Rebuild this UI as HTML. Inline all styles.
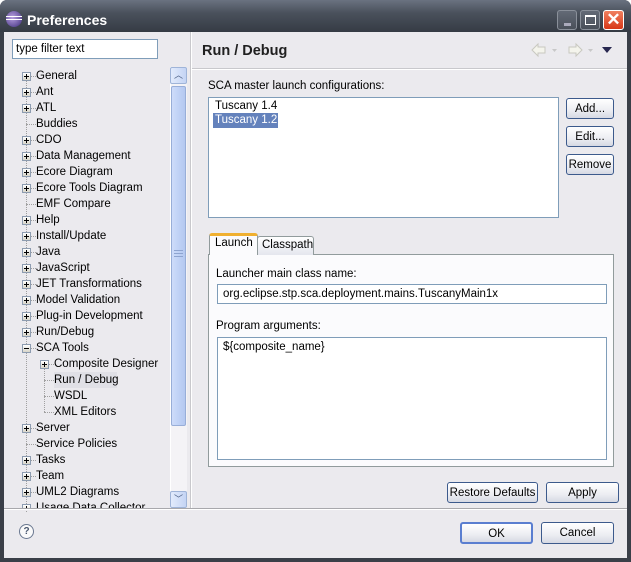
<!DOCTYPE html>
<html><head><style>
*{box-sizing:border-box;margin:0;padding:0}
body{width:631px;height:562px;overflow:hidden;font-family:"Liberation Sans",sans-serif;font-size:11px;color:#000;background:#fff}
.a{position:absolute}
#win{left:0;top:0;width:631px;height:562px;background:#3a3f48;border-radius:7px 7px 0 0}
#title{left:0;top:0;width:631px;height:32px;border-radius:7px 7px 0 0;background:linear-gradient(#6a7280,#4a515c 40%,#353b44)}
#body{left:4px;top:32px;width:623px;height:526px;background:#ebeaee}
.btn{position:absolute;border:1px solid #3c5a8c;border-radius:3px;background:linear-gradient(#fff,#ecedf2 60%,#d6d9e3);text-align:center;font-size:11.5px;line-height:20px}
.t{position:absolute;height:16px;line-height:16px;font-size:11.5px;white-space:nowrap}
.pb{position:absolute;width:9px;height:9px;border:1px solid #8d9cb0;background:linear-gradient(#fff,#d8d5c8);}
.pb:before{content:"";position:absolute;left:1px;top:3px;width:5px;height:1px;background:#000}
.pb.p:after{content:"";position:absolute;left:3px;top:1px;width:1px;height:5px;background:#000}
.dh{position:absolute;height:0;border-top:1px dotted #a0a0a0}
.dv{position:absolute;width:0;border-left:1px dotted #a0a0a0}
</style></head><body>
<div id="win" class="a"></div>
<div id="title" class="a">
 <div class="a" style="left:6px;top:11px;width:16px;height:16px;border-radius:50%;background:radial-gradient(circle at 40% 40%,#b8a0e0,#3a2a7a)"></div>
 <div class="a" style="left:6px;top:16px;width:16px;height:1px;background:#fff"></div>
 <div class="a" style="left:6px;top:19px;width:16px;height:1px;background:#fff"></div>
 <div class="a" style="left:27px;top:12px;color:#fff;font-weight:bold;font-size:14px">Preferences</div>
 <div class="a" style="left:557px;top:10px;width:20px;height:20px;border:1px solid #8a909a;border-radius:3px;background:linear-gradient(#636a76,#4a505a)"><div class="a" style="left:6px;top:12px;width:7px;height:3px;background:#aab"></div></div>
 <div class="a" style="left:580px;top:10px;width:20px;height:20px;border:1px solid #8a909a;border-radius:3px;background:linear-gradient(#636a76,#4a505a)"><div class="a" style="left:4px;top:4px;width:11px;height:10px;border:1px solid #fff;border-top-width:2px"></div></div>
 <div class="a" style="left:603px;top:10px;width:21px;height:20px;border:1px solid #fff;border-radius:3px;background:linear-gradient(#f08060,#d83818);color:#fff;font-weight:bold;font-size:17px;line-height:18px;text-align:center">✕</div>
</div>
<div id="body" class="a">
 <div class="a" style="left:8px;top:7px;width:146px;height:20px;border:1px solid #7f9db9;background:#fff;padding:2px 3px;font-size:11.5px;line-height:14px">type filter text</div>
 <div class="a" style="left:186px;top:0;width:1px;height:476px;background:#c8c8cc"></div>
 <div class="a" style="left:187px;top:0;width:1px;height:476px;background:#fff"></div>
 <div class="a" style="left:166px;top:35px;width:17px;height:441px;background:#f4f3f6;border-left:1px solid #fff"></div>
 <div class="a" style="left:166px;top:35px;width:17px;height:17px;border:1px solid #9fb4d8;border-radius:2px;background:linear-gradient(90deg,#e2ebfc,#c4d4f4);text-align:center;font-size:9px;line-height:15px;color:#4d6185">︿</div>
 <div class="a" style="left:167px;top:54px;width:15px;height:340px;border:1px solid #98aed8;border-radius:2px;background:linear-gradient(90deg,#cedcfa,#c0d2f6 50%,#b4c8f0)"></div>
 <div class="a" style="left:170px;top:218px;width:9px;height:7px;border-top:1px solid #8ea4d0;border-bottom:1px solid #8ea4d0"><div style="margin-top:2px;border-top:1px solid #8ea4d0"></div></div>
 <div class="a" style="left:166px;top:459px;width:17px;height:17px;border:1px solid #9fb4d8;border-radius:2px;background:linear-gradient(90deg,#e2ebfc,#c4d4f4);text-align:center;font-size:9px;line-height:15px;color:#4d6185">﹀</div>
 <div class="dv" style="left:22px;top:40px;height:440px"></div>
 <div class="dv" style="left:40px;top:330px;height:50px"></div>
 <div id="tree"></div>
 <div class="a" style="left:198px;top:11px;font-size:14.5px;font-weight:bold;color:#202020">Run / Debug</div>
 <svg class="a" style="left:525px;top:9px" width="90" height="18"><path d="M3 9 L9 3 V6 H16 V12 H9 V15 Z" fill="#f4f4ec" stroke="#c8c8c0"/><path d="M23 8 h5 l-2.5 3z" fill="#c8c8c8"/><path d="M53 9 L47 3 V6 H40 V12 H47 V15 Z" fill="#f4f4ec" stroke="#c8c8c0"/><path d="M59 8 h5 l-2.5 3z" fill="#c8c8c8"/><path d="M73 6 h10 l-5 6z" fill="#282850"/></svg>
 <div class="a" style="left:188px;top:36px;width:435px;height:1px;background:#c8c8cc"></div>
 <div class="a" style="left:188px;top:37px;width:435px;height:1px;background:#fff"></div>
 <div class="t a" style="left:204px;top:46px">SCA master launch configurations:</div>
 <div class="a" style="left:204px;top:65px;width:351px;height:121px;border:1px solid #7f9db9;background:#fff"></div>
 <div class="t a" style="left:211px;top:66px">Tuscany 1.4</div>
 <div class="a" style="left:209px;top:81px;width:65px;height:15px;background:#6482bc"></div>
 <div class="t a" style="left:211px;top:80px;color:#fff">Tuscany 1.2</div>
 <div class="btn" style="left:562px;top:66px;width:48px;height:21px">Add...</div>
 <div class="btn" style="left:562px;top:94px;width:48px;height:21px">Edit...</div>
 <div class="btn" style="left:562px;top:122px;width:48px;height:21px">Remove</div>
 <div class="a" style="left:204px;top:222px;width:406px;height:213px;border:1px solid #919b9c;background:#fbfbfd"></div>
 <div class="a" style="left:253px;top:204px;width:57px;height:19px;border:1px solid #919b9c;border-bottom:none;border-radius:3px 3px 0 0;background:linear-gradient(#fff,#e4e6ee)"></div>
 <div class="t a" style="left:258px;top:205px">Classpath</div>
 <div class="a" style="left:205px;top:201px;width:49px;height:22px;border:1px solid #919b9c;border-top:3px solid #f0b030;border-bottom:none;border-radius:3px 3px 0 0;background:#fbfbfd"></div>
 <div class="t a" style="left:211px;top:203px">Launch</div>
 <div class="t a" style="left:212px;top:234px">Launcher main class name:</div>
 <div class="a" style="left:213px;top:252px;width:390px;height:20px;border:1px solid #7f9db9;background:#fff"></div>
 <div class="t a" style="left:219px;top:254px">org.eclipse.stp.sca.deployment.mains.TuscanyMain1x</div>
 <div class="t a" style="left:212px;top:286px">Program arguments:</div>
 <div class="a" style="left:213px;top:305px;width:390px;height:123px;border:1px solid #7f9db9;background:#fff"></div>
 <div class="t a" style="left:219px;top:307px">${composite_name}</div>
 <div class="btn" style="left:443px;top:450px;width:91px;height:21px">Restore Defaults</div>
 <div class="btn" style="left:542px;top:450px;width:73px;height:21px">Apply</div>
 <div class="a" style="left:0;top:476px;width:623px;height:1px;background:#a8a8ac"></div>
 <div class="a" style="left:0;top:477px;width:623px;height:1px;background:#fff"></div>
 <div class="a" style="left:15px;top:492px;width:15px;height:15px;border:1px solid #6a7890;border-radius:50%;background:#fafafa;text-align:center;font-size:10px;line-height:13px;font-weight:bold;color:#4a5870">?</div>
 <div class="btn" style="left:456px;top:490px;width:73px;height:22px;border:2px solid #5a7ed0">OK</div>
 <div class="btn" style="left:537px;top:490px;width:73px;height:22px">Cancel</div>
</div>
<script>
var items=[["General",1,0],["Ant",1,0],["ATL",1,0],["Buddies",0,0],["CDO",1,0],["Data Management",1,0],["Ecore Diagram",1,0],["Ecore Tools Diagram",1,0],["EMF Compare",0,0],["Help",1,0],["Install/Update",1,0],["Java",1,0],["JavaScript",1,0],["JET Transformations",1,0],["Model Validation",1,0],["Plug-in Development",1,0],["Run/Debug",1,0],["SCA Tools",2,0],["Composite Designer",1,1],["Run / Debug",0,1],["WSDL",0,1],["XML Editors",0,1],["Server",1,0],["Service Policies",0,0],["Tasks",1,0],["Team",1,0],["UML2 Diagrams",1,0],["Usage Data Collector",1,0]];
var h="";
items.forEach(function(it,i){
 var top=36+16*i, x=it[2]?36:18, cy=top+8;
 if(it[1]) h+='<div class="pb '+(it[1]==1?'p':'')+'" style="left:'+x+'px;top:'+(cy-4)+'px"></div>';
 h+='<div class="dh" style="left:'+(x+(it[1]?9:4))+'px;top:'+cy+'px;width:'+(it[1]?5:10)+'px"></div>';
 if(i==19) h+='<div class="a" style="left:50px;top:'+(top)+'px;width:63px;height:16px;background:#e0e0e6"></div>';
 h+='<div class="t" style="left:'+(x+14)+'px;top:'+top+'px">'+it[0]+'</div>';
});
var d=document.createElement('div');d.className='a';d.style.cssText='left:0;top:0;width:165px;height:476px;overflow:hidden';d.innerHTML=h;
document.getElementById('tree').appendChild(d);
</script>
</body></html>
